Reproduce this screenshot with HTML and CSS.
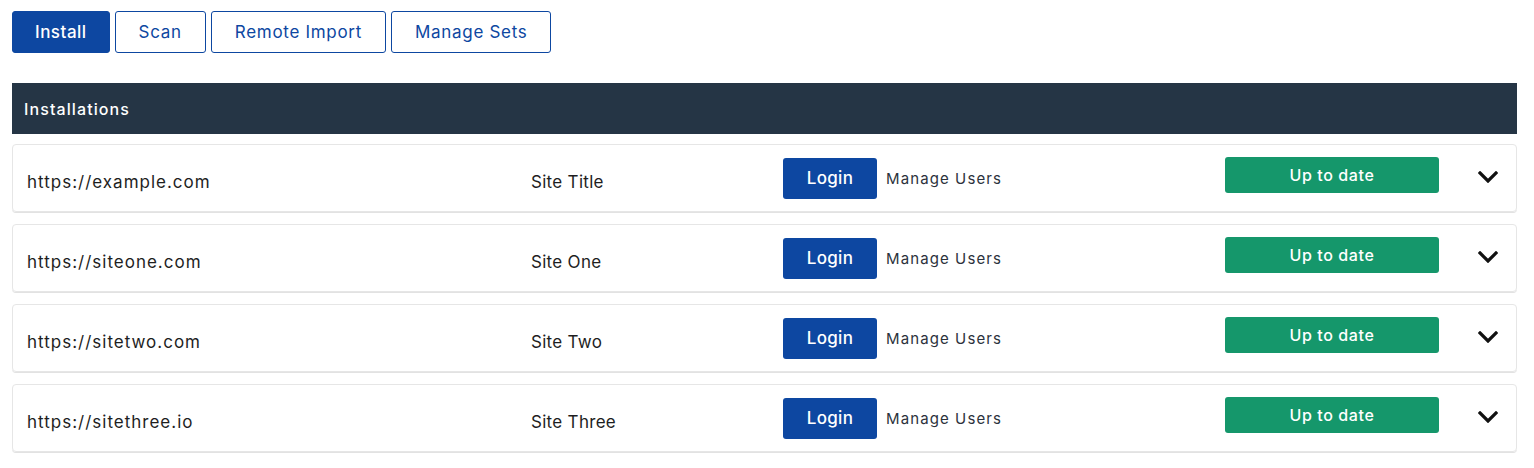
FILE: index.html
```html
<!DOCTYPE html>
<html lang="en">
<head>
    <meta charset="UTF-8">
    <title>Installations</title>
    <link rel="stylesheet" href="styles.css">
</head>
<body>
    <div class="page">
        <div class="tabs">
            <button class="tab tab-active">Install</button>
            <button class="tab">Scan</button>
            <button class="tab">Remote Import</button>
            <button class="tab">Manage Sets</button>
        </div>

        <div class="panel-header">Installations</div>

        <div class="install-list">
            <div class="install-row">
                <div class="col-url">https://example.com</div>
                <div class="col-title">Site Title</div>
                <div class="col-actions">
                    <button class="btn-login">Login</button>
                    <a class="manage-link" href="#">Manage Users</a>
                </div>
                <div class="col-status"><span class="status-ok">Up to date</span></div>
                <div class="col-toggle">
                    <svg width="20" height="12" viewBox="0 0 20 12"><path d="M2 2 L10 10 L18 2" fill="none" stroke="#111" stroke-width="3.2" stroke-linecap="square"/></svg>
                </div>
            </div>
            <div class="install-row">
                <div class="col-url">https://siteone.com</div>
                <div class="col-title">Site One</div>
                <div class="col-actions">
                    <button class="btn-login">Login</button>
                    <a class="manage-link" href="#">Manage Users</a>
                </div>
                <div class="col-status"><span class="status-ok">Up to date</span></div>
                <div class="col-toggle">
                    <svg width="20" height="12" viewBox="0 0 20 12"><path d="M2 2 L10 10 L18 2" fill="none" stroke="#111" stroke-width="3.2" stroke-linecap="square"/></svg>
                </div>
            </div>
            <div class="install-row">
                <div class="col-url">https://sitetwo.com</div>
                <div class="col-title">Site Two</div>
                <div class="col-actions">
                    <button class="btn-login">Login</button>
                    <a class="manage-link" href="#">Manage Users</a>
                </div>
                <div class="col-status"><span class="status-ok">Up to date</span></div>
                <div class="col-toggle">
                    <svg width="20" height="12" viewBox="0 0 20 12"><path d="M2 2 L10 10 L18 2" fill="none" stroke="#111" stroke-width="3.2" stroke-linecap="square"/></svg>
                </div>
            </div>
            <div class="install-row">
                <div class="col-url">https://sitethree.io</div>
                <div class="col-title">Site Three</div>
                <div class="col-actions">
                    <button class="btn-login">Login</button>
                    <a class="manage-link" href="#">Manage Users</a>
                </div>
                <div class="col-status"><span class="status-ok">Up to date</span></div>
                <div class="col-toggle">
                    <svg width="20" height="12" viewBox="0 0 20 12"><path d="M2 2 L10 10 L18 2" fill="none" stroke="#111" stroke-width="3.2" stroke-linecap="square"/></svg>
                </div>
            </div>
        </div>
    </div>
</body>
</html>
```

FILE: styles.css
```css
* {
    box-sizing: border-box;
}

body {
    margin: 0;
    background: #fff;
    font-family: Inter, "Noto Sans", sans-serif;
    color: #1e1e1e;
}

.page {
    padding: 11px 17px 0 12px;
}

.tabs {
    display: flex;
    gap: 5px;
}

.tab {
    height: 42px;
    padding: 0 23px;
    border: 1px solid #0d47a1;
    border-radius: 3px;
    background: #fff;
    color: #0d47a1;
    font-family: inherit;
    font-size: 17px;
    letter-spacing: 0.7px;
    cursor: pointer;
}

.tab-active {
    padding: 0 22px;
    background: #0d47a1;
    color: #fff;
    font-weight: 500;
    letter-spacing: 0.5px;
}

.panel-header {
    margin-top: 30px;
    height: 51px;
    padding: 0 12px;
    display: flex;
    align-items: center;
    background: #253545;
    color: #fff;
    font-size: 16px;
    font-weight: 500;
    letter-spacing: 1.1px;
}

.install-list {
    padding-top: 10px;
}

.install-row {
    display: flex;
    align-items: center;
    height: 68px;
    margin-bottom: 12px;
    padding: 0 14px;
    border: 1px solid #e6e6e6;
    border-radius: 4px;
    box-shadow: 0 1px 0 #e2e2e2;
}

.col-url {
    width: 504px;
    padding-top: 8px;
    font-size: 17px;
    letter-spacing: 1px;
}

.col-title {
    width: 252px;
    padding-top: 8px;
    font-size: 17px;
    letter-spacing: 0.3px;
}

.col-actions {
    width: 442px;
    display: flex;
    align-items: center;
    gap: 9px;
}

.btn-login {
    width: 94px;
    height: 41px;
    border: none;
    border-radius: 3px;
    background: #0d47a1;
    color: #fff;
    font-family: inherit;
    font-size: 17px;
    font-weight: 500;
    letter-spacing: 0.3px;
}

.manage-link {
    color: #2c323c;
    font-size: 15px;
    letter-spacing: 1.1px;
    text-decoration: none;
}

.col-status {
    align-self: flex-start;
    padding-top: 12px;
}

.status-ok {
    display: flex;
    align-items: center;
    justify-content: center;
    width: 214px;
    height: 36px;
    border-radius: 3px;
    background: #15976b;
    color: #fff;
    font-size: 16px;
    font-weight: 500;
    letter-spacing: 0.6px;
}

.col-toggle {
    flex: 1;
    display: flex;
    justify-content: flex-end;
    padding-right: 4px;
    padding-bottom: 2px;
}
```
